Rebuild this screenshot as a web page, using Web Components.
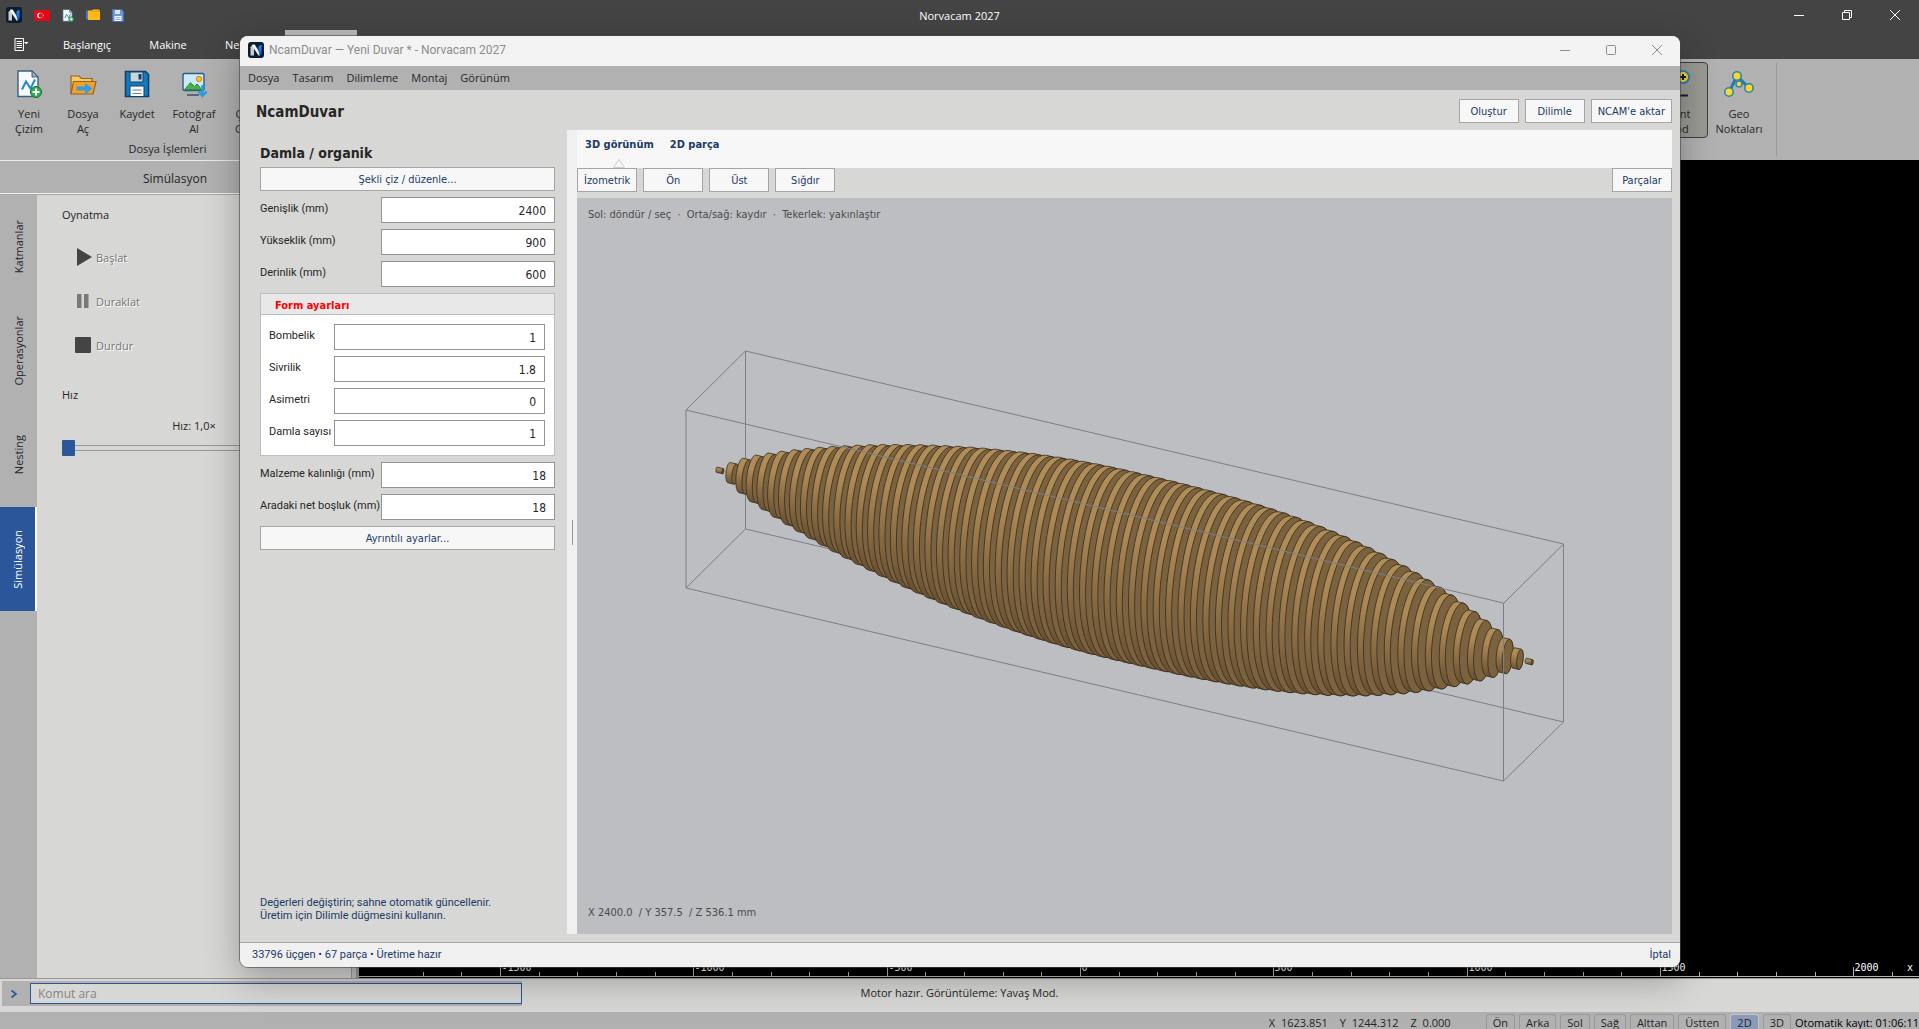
<!DOCTYPE html>
<html lang="tr">
<head>
<meta charset="utf-8">
<title>Norvacam 2027</title>
<style>
  html, body { margin: 0; height: 100%; overflow: hidden; }
  body {
    --bar: #b1b1b1; --panel: #d7d7d5; --dark: #444444; --accent: #2b579a; --navy: #1c3a66;
    --ui: "Open Sans", "Noto Sans", sans-serif;
    --form: "DejaVu Sans Condensed", "DejaVu Sans", sans-serif;
    --label: Roboto, "Noto Sans", sans-serif;
    font-family: var(--ui); font-size: 11px; line-height: 15px; color: #262626; background: #000;
  }
</style>
</head>
<body>
<nc-app></nc-app>
<script>
const ICONS = {
  logo: `<svg viewBox="0 0 16 16"><defs><linearGradient id="b" x1="0" y1="0" x2="0" y2="1"><stop offset="0" stop-color="#1f9bff"/><stop offset="1" stop-color="#0a4fd0"/></linearGradient></defs><rect width="16" height="16" rx="3" fill="#0c1c2e"/><path d="M2.500 13.500V5.200l2-2.700 1.500 2v9z" fill="#c9cdd2"/><path d="M4.500 2.500h2.200l5.300 8.500v2.500h-1.500L4.500 4.500z" fill="#f1f3f5"/><path d="M10.500 9V4.500l3-2v9l-2 2z" fill="url(#b)"/></svg>`,
  flag: `<svg viewBox="0 0 16 11"><rect width="16" height="11" fill="#e30a17"/><circle cx="6" cy="5.500" r="2.800" fill="#fff"/><circle cx="6.800" cy="5.500" r="2.200" fill="#e30a17"/><path d="M8.200 5.500l2-.7-1.200 1.700V4.500l1.200 1.700z" fill="#fff"/></svg>`,
  page: `<svg viewBox="0 0 26 28"><path d="M2 1h14l6 6v19.500H2z" fill="#f6fafc" stroke="#3b5f7c" stroke-width="1.400"/><path d="M16 1v6h6z" fill="#8fb2c6" stroke="#3b5f7c"/><path d="M6 19.500l4-8 4.500 7 4.500-9" fill="none" stroke="#2389c9" stroke-width="2"/><circle cx="20" cy="22" r="5.500" fill="#2fae4e" stroke="#1f6f36"/><path d="M20 18.500v7M16.500 22h7" stroke="#fff" stroke-width="2"/></svg>`,
  folder: `<svg viewBox="0 0 14 12"><path d="M0 1.500h2v9H0z" fill="#4f78b8"/><path d="M2 11V1.500h4l1-1h6l1 2V11z" fill="#fdbb14"/><path d="M6 2.500h7.500" stroke="#d99a00" stroke-width=".8"/></svg>`,
  disk: `<svg viewBox="0 0 12 13"><path d="M.5.500h9L11.500 2.500v10H.5z" fill="#6f95cf" stroke="#4b6ea8"/><rect x="3" y="1" width="5" height="4" fill="#dce6f4"/><rect x="2.500" y="7" width="7" height="5" fill="#f4f7fb"/><path d="M3.500 8.700h5M3.500 10.500h5" stroke="#6f95cf" stroke-width=".8"/></svg>`,
  file: `<svg viewBox="0 0 15 14"><path d="M1 .5h8.500v12H1z" fill="none" stroke="#fff"/><path d="M2.500 3.500h5.500M2.500 5.500h5.500M2.500 7.500h5.500M2.500 9.500h5.500" stroke="#fff"/><path d="M10 4h4.500L12.300 6.300z" fill="#fff"/></svg>`,
  open: `<svg viewBox="0 0 28 24"><path d="M2 22V4h8l2.500 2.500H23V10" fill="#f9c95c" stroke="#8f6427" stroke-width="1.200"/><path d="M2 22L4.500 9.500h22.500L24 22z" fill="#f3a02c" stroke="#8f6427" stroke-width="1.200"/><path d="M7.500 14.500H16v-3.500l7.500 5.500-7.500 6v-4H7.500z" fill="#2f9fe0"/></svg>`,
  save: `<svg viewBox="0 0 26 28"><path d="M1.500 1.500h20l3 3v22h-23z" fill="#0f7cc2" stroke="#143f66" stroke-width="1.600"/><rect x="6" y="2" width="13" height="10" rx="1" fill="#c9d4dc" stroke="#143f66"/><rect x="14.500" y="4" width="3" height="5.500" fill="#143f66"/><rect x="6" y="16" width="14" height="10.500" fill="#f7f9fa" stroke="#143f66"/><path d="M8.500 20h9M8.500 23.500h9" stroke="#71828f" stroke-width="1.200"/></svg>`,
  photo: `<svg viewBox="0 0 27 27"><rect x="2" y="2.500" width="21" height="17" rx="1.500" fill="#c9ebf9" stroke="#2a5c85" stroke-width="1.400"/><circle cx="18" cy="8" r="2.700" fill="#fdc02f" stroke="#d8890f"/><path d="M3.500 18.700l6-7 4 3.800 2.500-2.500 5 5.700z" fill="#4caf50" stroke="#2d8433"/><path d="M6 24h12" stroke="#34506a" stroke-width="1.500"/><path d="M21.500 14v10M17.500 20.500l4 4.500 4-4.500" fill="none" stroke="#2b9be0" stroke-width="2.400"/></svg>`,
  cubes: `<svg viewBox="0 0 26 28"><rect x="15" y="3" width="20" height="12" fill="#8395a3"/></svg>`,
  point: `<svg viewBox="0 0 26 28"><path d="M2 25.500h22" stroke="#1d1d1d" stroke-width="2"/><circle cx="19" cy="7" r="6" fill="#fbd72b" stroke="#2680b5" stroke-width="2"/><path d="M19 4v6M16 7h6" stroke="#1d1d1d" stroke-width="2"/></svg>`,
  geo: `<svg viewBox="0 0 30 26"><path d="M5 21L13 5l12 12" fill="none" stroke="#2878ac" stroke-width="3"/><g fill="#fbd72b" stroke="#2f86ad" stroke-width="1.600"><circle cx="13" cy="5" r="4.200"/><circle cx="5" cy="21" r="4.200"/><circle cx="25" cy="17" r="4.200"/><circle cx="15" cy="13" r="3"/></g></svg>`,
  play: `<svg viewBox="0 0 18 20"><path d="M3 1v18l15-9z" fill="#444"/></svg>`,
  pause: `<svg viewBox="0 0 18 20"><path d="M3 3h4.500v14H3zM10 3h4.500v14H10z" fill="#7a7a7a"/></svg>`,
  stop: `<svg viewBox="0 0 18 20"><rect x="1" y="2" width="16" height="16" rx="1" fill="#444"/></svg>`,
  min: `<svg viewBox="0 0 12 12"><path d="M1 6.500h10" stroke="currentColor"/></svg>`,
  max: `<svg viewBox="0 0 12 12"><rect x="1.500" y="1.500" width="9" height="9" rx="1" fill="none" stroke="currentColor"/></svg>`,
  restore: `<svg viewBox="0 0 12 12"><path d="M1.500 3.500h7v7h-7zM3.500 3V1.500h7v7H9" fill="none" stroke="currentColor"/></svg>`,
  close: `<svg viewBox="0 0 12 12"><path d="M1 1l10 10M11 1L1 11" stroke="currentColor"/></svg>`,
  chevron: `<svg viewBox="0 0 8 10"><path d="M1.500 1.500L6 5 1.500 8.500" fill="none" stroke="#2b579a" stroke-width="1.600"/></svg>`
};
const BASE = `<style>
  *, *::before, *::after { box-sizing: border-box; }
  button, input { font: inherit; color: inherit; margin: 0; }
  button { background: none; border: 0; padding: 0; }
</style>`;
function define(name, render, after) {
  customElements.define(name, class extends HTMLElement {
    connectedCallback() {
      if (this.shadowRoot) return;
      const t = document.createElement('template');
      t.innerHTML = BASE + render(this);
      this.attachShadow({ mode: 'open' }).append(t.content.cloneNode(true));
      if (after) after(this.shadowRoot, this);
    }
  });
}
const a = (el, n, d = '') => el.getAttribute(n) ?? d;

define('nc-icon', el => `<style>
  :host { display: block; flex: none; width: ${a(el, 'w', 16)}px; height: ${a(el, 'h', 16)}px; }
  svg { display: block; width: 100%; height: 100%; }
</style>${ICONS[a(el, 'name')]}`);

define('nc-window-buttons', el => `<style>
  :host { display: flex; height: 100%; }
  button { width: ${a(el, 'pitch', 46)}px; display: grid; place-items: center; }
</style>
<button aria-label="Küçült"><nc-icon name="min" w="12" h="12"></nc-icon></button>
<button aria-label="Büyüt"><nc-icon name="${a(el, 'mid', 'max')}" w="12" h="12"></nc-icon></button>
<button aria-label="Kapat"><nc-icon name="close" w="12" h="12"></nc-icon></button>`);

define('nc-titlebar', () => `<style>
  :host { display: grid; grid-template-columns: 1fr auto 1fr; align-items: center; height: 30px; background: var(--dark); color: #fff; }
  .quick { display: flex; align-items: center; gap: 12px; padding-left: 6px; }
  nc-window-buttons { justify-self: end; }
</style>
<div class="quick"><nc-icon name="logo"></nc-icon><nc-icon name="flag" w="16" h="11"></nc-icon><nc-icon name="page" w="12" h="13"></nc-icon><nc-icon name="folder" w="14" h="12"></nc-icon><nc-icon name="disk" w="12" h="13"></nc-icon></div>
<div>Norvacam 2027</div>
<nc-window-buttons mid="restore" pitch="48"></nc-window-buttons>`);

define('nc-ribbon-tabs', () => `<style>
  :host { display: flex; height: 29px; background: var(--dark); color: #fff; padding-left: 14px; }
  button { display: grid; place-items: center; }
  .tab { width: 72px; margin-right: 9px; }
  .narrow { width: 63px; }
  .file { width: 14px; margin-right: 23px; }
  .on { background: #bcbcbc; }
</style>
<button class="file" aria-label="Dosya menüsü"><nc-icon name="file" w="15" h="14"></nc-icon></button>
<button class="tab">Başlangıç</button><button class="tab">Makine</button><button class="tab narrow">Nesting</button>
<button class="tab on" aria-label="Araçlar"></button>`);

define('nc-tool', el => `<style>
  :host { display: block; }
  button { width: ${a(el, 'w', 54)}px; height: 76px; display: flex; flex-direction: column; justify-content: flex-start; align-items: center; gap: 7px; padding-top: 6px; border: 1px solid transparent; border-radius: 4px; }
  :host([on]) button { background: #9a9a94; border-color: #3f3f3f; }
  .i { height: 30px; display: grid; place-items: center; }
  .l { height: 30px; }
</style>
<button><span class="i"><nc-icon name="${a(el, 'icon')}" w="${a(el, 'iw', 26)}" h="${a(el, 'ih', 28)}"></nc-icon></span><span class="l"><slot></slot></span></button>`);

define('nc-ribbon', () => `<style>
  :host { display: flex; justify-content: space-between; height: 101px; background: var(--bar); padding-top: 3px; }
  .row { display: flex; }
  .files { padding-left: 2px; }
  .cap { width: 335px; text-align: center; margin-top: 3px; }
  .end { width: 143px; border-left: 1px solid #9a9a96; margin: 1px 0 4px 6px; }
</style>
<div>
  <div class="row files">
    <nc-tool icon="page">Yeni<br>Çizim</nc-tool><nc-tool icon="open" iw="28" ih="24">Dosya<br>Aç</nc-tool><nc-tool icon="save">Kaydet</nc-tool><nc-tool icon="photo" w="60" iw="27" ih="27">Fotoğraf<br>Al</nc-tool><nc-tool icon="cubes" w="30">Ç<br>G</nc-tool>
  </div>
  <div class="cap">Dosya İşlemleri</div>
</div>
<div class="row">
  <nc-tool icon="point" w="62" on>Point<br>Mod</nc-tool><nc-tool icon="geo" w="62" iw="30" ih="26">Geo<br>Noktaları</nc-tool>
  <div class="end"></div>
</div>`);

define('nc-side-tabs', () => `<style>
  :host { display: flex; flex-direction: column; width: 37px; background: var(--bar); }
  button { height: 104px; display: grid; place-items: center; }
  span { writing-mode: vertical-rl; transform: rotate(180deg); }
  .on { background: var(--accent); color: #fff; border-right: 2px solid #fff; }
</style>
<button><span>Katmanlar</span></button><button><span>Operasyonlar</span></button><button><span>Nesting</span></button><button class="on"><span>Simülasyon</span></button>`);

define('nc-playback', () => `<style>
  :host { display: block; padding: 12px 25px; }
  .b { display: flex; align-items: center; gap: 4px; height: 44px; margin-left: 12px; color: #757575; text-shadow: 1px 1px #fff; }
  .list { padding: 13px 0 20px; }
  label { display: block; text-align: center; margin: 16px 0 7px; }
  input { appearance: none; display: block; width: 100%; height: 16px; background: none; }
  input::-webkit-slider-runnable-track { height: 6px; border: solid #999; border-width: 1px 0; }
  input::-webkit-slider-thumb { appearance: none; width: 13px; height: 16px; margin-top: -6px; background: var(--accent); border-radius: 1px; }
</style>
<div>Oynatma</div>
<div class="list">
<button class="b"><nc-icon name="play" w="18" h="20"></nc-icon>Başlat</button>
<button class="b"><nc-icon name="pause" w="18" h="20"></nc-icon>Duraklat</button>
<button class="b"><nc-icon name="stop" w="18" h="20"></nc-icon>Durdur</button>
</div>
<div>Hız</div>
<label for="speed">Hız: 1,0×</label>
<input id="speed" type="range" min="0" max="10" value="0">`);

define('nc-dock', () => `<style>
  :host { display: flex; flex-direction: column; width: 359px; background: var(--panel); }
  header { height: 34px; border-top: 1px solid #e8e8e8; border-bottom: 1px solid #f0f0f0; background: var(--bar); font-size: 12px; text-align: center; line-height: 35px; padding-right: 9px; }
  .row { flex: 1; display: flex; border-top: 1px solid #a8a8a8; }
  nc-playback { width: 315px; border-right: 1px solid #999; }
  .split { flex: 1; border-right: 3px solid #999; background: #c4c4c2; }
</style>
<header>Simülasyon</header>
<div class="row"><nc-side-tabs></nc-side-tabs><nc-playback></nc-playback><div class="split"></div></div>`);

define('nc-canvas', () => `<style>
  :host { flex: 1; display: flex; flex-direction: column; justify-content: flex-end; background: #000; min-width: 0; }
  svg { display: block; width: 100%; height: 22px; }
  text { font: 10px "DejaVu Sans Mono", monospace; fill: #fff; }
  path { stroke: #b5b5b5; fill: none; shape-rendering: crispEdges; }
</style><svg></svg>`, root => {
  const unit = 193.3, zero = 721;
  let d = 'M0 20.5H2000', labels = '';
  for (let i = -17; i <= 21; i++) {
    const x = Math.round(zero + i * unit / 5) + 0.5;
    d += `M${x} 20V${i % 5 ? 16 : 11}`;
    if (i % 5 === 0) labels += `<text x="${x + 1}" y="15">${i * 100}</text>`;
  }
  root.querySelector('svg').innerHTML = `<path d="${d}"/>${labels}<text x="1548" y="15">x</text>`;
});

define('nc-command', () => `<style>
  :host { display: grid; grid-template-columns: 1fr auto 1fr; align-items: start; height: 34px; background: var(--panel); border-top: 1px solid #999994; }
  form { display: flex; align-items: center; width: 520px; height: 25px; margin: 2px; background: var(--bar); }
  label { width: 28px; padding-right: 4px; display: grid; place-items: center; }
  input { flex: 1; height: 21px; border: 1px solid var(--accent); background: var(--panel); padding: 0 7px; outline: 0; font-size: 12px; }
  input::placeholder { color: #858585; opacity: 1; }
  p { margin: 6px 0; }
</style>
<form><label for="cmd" aria-label="Komut"><nc-icon name="chevron" w="8" h="10"></nc-icon></label><input id="cmd" placeholder="Komut ara"></form>
<p>Motor hazır. Görüntüleme: Yavaş Mod.</p>`);

define('nc-status', () => `<style>
  :host { display: flex; justify-content: flex-end; align-items: flex-start; gap: 4px; padding-top: 2px; background: var(--bar); white-space: nowrap; line-height: 13px; }
  button { height: 15px; border: 1px solid #999; border-bottom: 0; border-radius: 3px 3px 0 0; padding: 1px 6px 0; }
  .on { background: #8b9ab8; border-color: #c4c4c4; }
  .pos { display: flex; gap: 12px; margin-right: 31px; padding-top: 2px; }
  .save { padding-top: 2px; color: #000; }
</style>
<div class="pos"><span>X&nbsp; 1623.851</span><span>Y&nbsp; 1244.312</span><span>Z&nbsp; 0.000</span></div>
<button>Ön</button><button>Arka</button><button>Sol</button><button>Sağ</button><button>Alttan</button><button>Üstten</button><button class="on">2D</button><button>3D</button>
<div class="save">Otomatik kayıt: 01:06:11</div>`);

define('nc-button', () => `<style>
  :host { display: block; min-width: 60px; }
  button { width: 100%; height: 24px; padding: 0 6px; border: 1px solid #a5a5a5; background: #f7f7f7; color: var(--navy); font-family: var(--form); white-space: nowrap; }
</style><button><slot></slot></button>`);

define('nc-field', el => `<style>
  :host { display: flex; justify-content: space-between; }
  label { padding-top: 4px; white-space: nowrap; }
  input { width: ${a(el, 'w', 174)}px; height: 26px; border: 1px solid #949494; background: #fff; text-align: right; padding: 1px 8px 0; font: 12px var(--form); outline: 0; }
</style><label for="v">${a(el, 'label')}</label><input id="v" value="${a(el, 'value')}">`);

define('nc-group', el => `<style>
  :host { display: block; border: 1px solid #bdbdbd; background: #fff; }
  h3 { margin: 0; height: 21px; padding-left: 14px; background: #e8e8e8; border-bottom: 1px solid #bdbdbd; color: #f00; font: bold 11px/23px var(--form); }
  div { display: flex; flex-direction: column; gap: 6px; padding: 9px 9px 9px 8px; }
</style><h3>${a(el, 'title-text')}</h3><div><slot></slot></div>`);

define('nc-form', () => `<style>
  :host { display: flex; flex-direction: column; gap: 6px; width: 327px; padding: 16px 12px 12px 20px; font-family: var(--label); }
  h2 { margin: 0; font: bold 14px/15px var(--form); }
  p { margin: auto 0 0; line-height: 13px; color: var(--navy); }
</style>
<h2>Damla / organik</h2>
<nc-button>Şekli çiz / düzenle...</nc-button>
<nc-field label="Genişlik (mm)" value="2400"></nc-field>
<nc-field label="Yükseklik (mm)" value="900"></nc-field>
<nc-field label="Derinlik (mm)" value="600"></nc-field>
<nc-group title-text="Form ayarları">
  <nc-field w="211" label="Bombelik" value="1"></nc-field>
  <nc-field w="211" label="Sivrilik" value="1.8"></nc-field>
  <nc-field w="211" label="Asimetri" value="0"></nc-field>
  <nc-field w="211" label="Damla sayısı" value="1"></nc-field>
</nc-group>
<nc-field label="Malzeme kalınlığı (mm)" value="18"></nc-field>
<nc-field label="Aradaki net boşluk (mm)" value="18"></nc-field>
<nc-button>Ayrıntılı ayarlar...</nc-button>
<p>Değerleri değiştirin; sahne otomatik güncellenir.<br>Üretim için Dilimle düğmesini kullanın.</p>`);

/* Sliced body: flat discs stacked along the long axis of the bounding box. */
define('nc-scene', () => `<style>
  :host { flex: 1; display: grid; background: #bdbec2; color: #4a4a4a; font-family: var(--form); min-height: 0; }
  svg, .t, .b { grid-area: 1 / 1; }
  svg { width: 100%; height: 100%; min-height: 0; }
  .t { padding: 9px 11px; align-self: start; z-index: 1; }
  .b { padding: 14px 11px; align-self: end; z-index: 1; }
  .box { fill: none; stroke: #7d7e86; }
</style>
<div class="t">Sol: döndür / seç &nbsp;·&nbsp; Orta/sağ: kaydır &nbsp;·&nbsp; Tekerlek: yakınlaştır</div>
<svg viewBox="0 0 1095 736" aria-label="3D model"></svg>
<div class="b">X 2400.0 &nbsp;/ Y 357.5 &nbsp;/ Z 536.1 mm</div>`, root => {
  const axis = [817.5, 193], depth = [29.75, -29.5], up = 89, start = [138.75, 271.5];
  const pt = p => p[0].toFixed(2) + ' ' + p[1].toFixed(2);
  const len = 18 / 2400, shift = [axis[0] * len, axis[1] * len];
  const radius = m => {
    const blunt = 1 - Math.pow(Math.abs(1 - 2 * m), 2.8);
    return m < 0.5 ? Math.min(blunt, Math.pow(Math.sin(Math.PI * m), 0.75)) : blunt;
  };
  let discs = '';
  for (let i = 0; i < 67; i++) {
    const s = (3 + 36 * i) / 2400;
    const k = radius(s + len / 2);
    const c = [start[0] + axis[0] * s, start[1] + axis[1] * s];
    const at = (t, o) => [c[0] + k * depth[0] * Math.cos(t) + o * shift[0], c[1] + k * (depth[1] * Math.cos(t) - up * Math.sin(t)) + o * shift[1]];
    const t0 = Math.atan2(shift[0] * up, shift[1] * depth[0] - shift[0] * depth[1]);
    const rim = [], face = [];
    for (let j = 0; j <= 24; j++) rim.push(at(t0 + Math.PI * j / 24, 0));
    for (let j = 0; j <= 24; j++) rim.push(at(t0 + Math.PI + Math.PI * j / 24, 1));
    for (let j = 0; j < 48; j++) face.push(at(Math.PI * 2 * j / 48, 1));
    discs += `<path fill="url(#rim)" d="M${rim.map(pt).join('L')}z"/><path fill="#7c6340" d="M${face.map(pt).join('L')}z"/>`;
  }
  root.querySelector('svg').innerHTML = `<defs><linearGradient id="rim" x1="0" y1="0" x2="0" y2="1"><stop offset="0" stop-color="#b18d58"/><stop offset=".3" stop-color="#ad8955"/><stop offset="1" stop-color="#674f31"/></linearGradient></defs>
  <path class="box" d="M109 212L168.500 153L986.500 346L927 405M168.500 153V331L109 390M168.500 331L986.500 524V346"/>
  <g stroke="#352b1c" stroke-width=".8">${discs}</g>
  <path class="box" d="M109 212V390L926.500 583L986.500 524M109 212L926.500 405V583"/>`;
});

define('nc-viewer', () => `<style>
  :host { flex: 1; display: flex; flex-direction: column; min-width: 0; }
  nav { display: flex; align-items: flex-start; gap: 16px; height: 38px; padding: 7px 8px 0; background: #f7f7f7; color: var(--navy); font: bold 11px/15px var(--form); }
  .on { display: flex; flex-direction: column; align-items: center; gap: 7px; }
  .on svg { width: 12px; height: 9px; }
  .tools { display: flex; gap: 6px; margin-bottom: 6px; }
  .last { margin-left: auto; }
</style>
<nav><button class="on">3D görünüm<svg viewBox="0 0 12 9"><path d="M.5 8.500L6 .5l5.500 8z" fill="#f7f7f7" stroke="#ccc"/></svg></button><button>2D parça</button></nav>
<div class="tools"><nc-button>İzometrik</nc-button><nc-button>Ön</nc-button><nc-button>Üst</nc-button><nc-button>Sığdır</nc-button><nc-button class="last">Parçalar</nc-button></div>
<nc-scene></nc-scene>`);

define('nc-dialog', () => `<style>
  :host { display: flex; flex-direction: column; background: var(--panel); border-radius: 8px; overflow: hidden; box-shadow: 0 0 0 1px rgba(70,70,70,.6), 0 12px 36px rgba(0,0,0,.3); }
  .title { display: flex; align-items: center; gap: 5px; height: 30px; padding: 0 0 2px 8px; background: #f3f3f3; color: #8c8c8c; font: 12px/15px var(--label); }
  .title nc-window-buttons { margin-left: auto; }
  .menu { display: flex; align-items: center; gap: 13px; height: 24px; padding: 0 0 1px 8px; background: var(--bar); }
  .head { display: flex; align-items: center; justify-content: space-between; height: 40px; padding: 2px 8px 0 16px; }
  h1 { margin: 0; padding-top: 2px; font: bold 15px/18px var(--form); }
  .acts { display: flex; gap: 6px; }
  .main { flex: 1; display: flex; min-height: 0; padding: 0 8px 8px 0; }
  .split { width: 10px; background: #f0f0f0; display: flex; align-items: center; justify-content: center; }
  .split i { width: 1px; height: 25px; background: #999; }
  footer { display: flex; justify-content: space-between; height: 25px; padding: 4px 9px 0 12px; background: #f0f0f0; border-top: 1px solid #a5a5a5; color: var(--navy); font-family: var(--label); }
</style>
<div class="title"><nc-icon name="logo"></nc-icon><span>NcamDuvar — Yeni Duvar * - Norvacam 2027</span><nc-window-buttons></nc-window-buttons></div>
<div class="menu"><button>Dosya</button><button>Tasarım</button><button>Dilimleme</button><button>Montaj</button><button>Görünüm</button></div>
<div class="head"><h1>NcamDuvar</h1><div class="acts"><nc-button>Oluştur</nc-button><nc-button>Dilimle</nc-button><nc-button>NCAM'e aktar</nc-button></div></div>
<div class="main"><nc-form></nc-form><div class="split"><i></i></div><nc-viewer></nc-viewer></div>
<footer><span>33796 üçgen • 67 parça • Üretime hazır</span><span>İptal</span></footer>`);

define('nc-app', () => `<style>
  :host { display: flex; flex-direction: column; height: 100vh; position: relative; }
  .work { flex: 1; display: flex; min-height: 0; }
  nc-dialog { position: absolute; inset: 36px 239px 62px 240px; }
</style>
<nc-titlebar></nc-titlebar><nc-ribbon-tabs></nc-ribbon-tabs><nc-ribbon></nc-ribbon>
<div class="work"><nc-dock></nc-dock><nc-canvas></nc-canvas></div>
<nc-command></nc-command><nc-status></nc-status>
<nc-dialog></nc-dialog>`);
</script>
</body>
</html>
